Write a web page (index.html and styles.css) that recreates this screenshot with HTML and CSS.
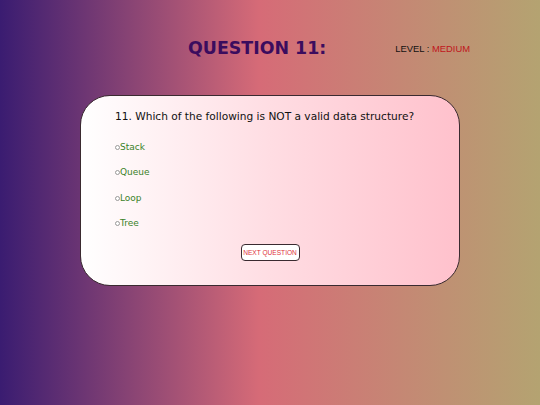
FILE: index.html
```html
<!DOCTYPE html>
<html>
<head>
<meta charset="utf-8">
<link rel="stylesheet" href="styles.css">
</head>
<body>
<div class="page">
  <header class="top">
    <h1 class="title">QUESTION 11:</h1>
    <div class="level">LEVEL : <span class="level-val">MEDIUM</span></div>
  </header>
  <main class="card">
    <p class="question">11. Which of the following is NOT a valid data structure?</p>
    <ul class="options">
      <li class="option"><span class="radio"></span>Stack</li>
      <li class="option"><span class="radio"></span>Queue</li>
      <li class="option"><span class="radio"></span>Loop</li>
      <li class="option"><span class="radio"></span>Tree</li>
    </ul>
    <div class="actions"><button class="next">NEXT QUESTION</button></div>
  </main>
</div>
</body>
</html>
```

FILE: styles.css
```css
html, body {
  margin: 0;
  padding: 0;
}
body {
  width: 540px;
  height: 405px;
  overflow: hidden;
  font-family: "DejaVu Sans", Verdana, sans-serif;
  background: linear-gradient(to right, #3a1c71 0%, #d66b77 48%, #b4a371 100%);
}
.page {
  height: 405px;
}
.top {
  display: flex;
  align-items: center;
  justify-content: space-between;
  padding: 38px 70px 0 188px;
  height: 21px;
}
.title {
  margin: 0;
  font-size: 17.4px;
  font-weight: bold;
  color: #3b0c5e;
  line-height: 21px;
}
.level {
  color: #111;
  font-family: "Liberation Sans", Arial, sans-serif;
  font-size: 9.4px;
}
.level-val {
  color: #c0151c;
}
.card {
  margin: 36px 80px 0 80px;
  border: 1px solid #3a2a30;
  border-radius: 30px;
  background: linear-gradient(to right, #ffffff 0%, #ffdde3 50%, #ffc1cc 100%);
  padding: 13px 0 0 34px;
  box-sizing: border-box;
  height: 191px;
}
.question {
  margin: 0;
  font-size: 10.6px;
  color: #111;
  line-height: 14px;
}
.options {
  list-style: none;
  margin: 19px 0 0 0;
  padding: 0;
  display: flex;
  flex-direction: column;
  gap: 14.3px;
}
.option {
  font-size: 9px;
  line-height: 11px;
  color: #3a8228;
  display: flex;
  align-items: center;
}
.radio {
  width: 3px;
  height: 3px;
  border: 1px solid #9a9a9a;
  border-radius: 50%;
  margin-right: 0;
  background: #fff;
}
.actions {
  display: flex;
  justify-content: center;
  margin: 15px 0 0 -34px;
}
.next {
  font-family: "Liberation Sans", Arial, sans-serif;
  font-size: 6.6px;
  white-space: nowrap;
  color: #e0303a;
  background: #fff;
  border: 1px solid #3a2a30;
  border-radius: 4px;
  height: 17px;
  width: 59px;
  padding: 0;
}
```
